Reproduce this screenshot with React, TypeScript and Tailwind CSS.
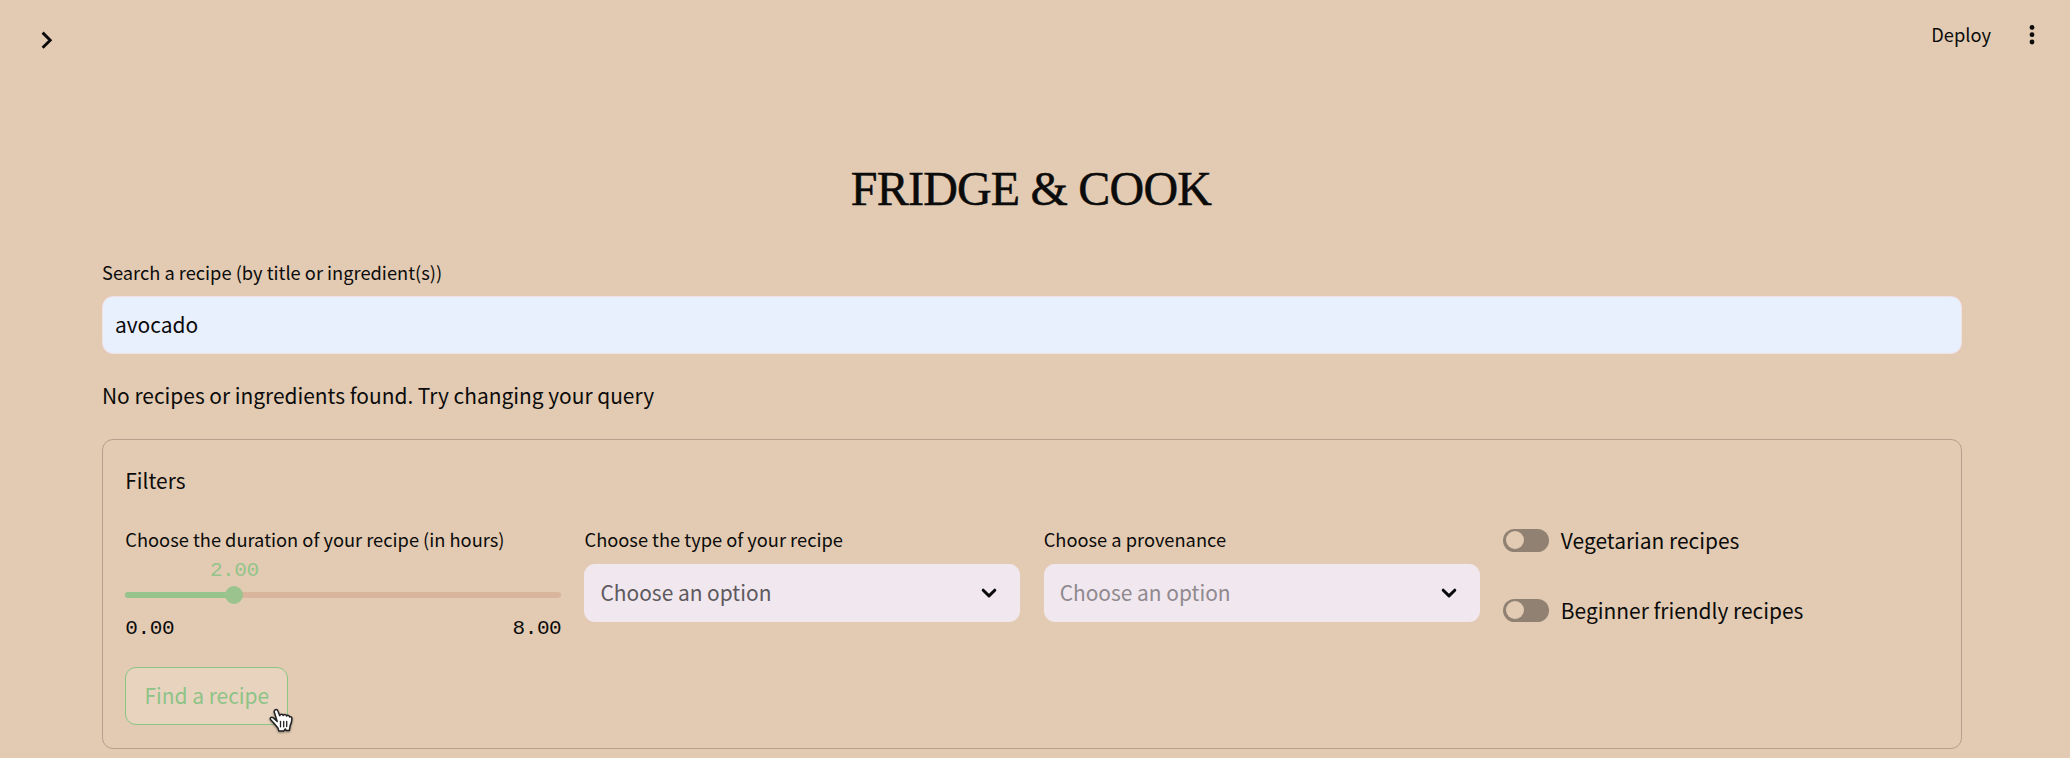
import React from "react";

function Label({ children }: { children: React.ReactNode }) {
  return <div className="h-7 whitespace-nowrap text-[18.28px] leading-7">{children}</div>;
}

function Chevron({ className }: { className: string }) {
  return (
    <svg viewBox="0 0 16 11" className={className} fill="none" stroke="currentColor" strokeWidth="3" strokeLinecap="round" strokeLinejoin="round">
      <path d="M2.2 2.2 8 7.9l5.8-5.7" />
    </svg>
  );
}

function Select({ label, tone }: { label: string; tone: string }) {
  return (
    <div className="w-[436px]">
      <Label>{label}</Label>
      <div className="mt-[11px] flex h-[58px] items-center justify-between rounded-[11px] bg-[#f1e7ef] pr-[23px] pl-4">
        <span className={`-mt-[2px] text-[20.92px] leading-9 ${tone}`}>Choose an option</span>
        <Chevron className="h-[11px] w-4" />
      </div>
    </div>
  );
}

function Toggle({ label }: { label: string }) {
  return (
    <div className="flex h-[34px] items-center gap-3">
      <div className="flex h-[23px] w-[46px] items-center rounded-full bg-[#908172] px-[3px]">
        <div className="size-[18px] rounded-full bg-[#e3cbb3]" />
      </div>
      <span className="text-[20.95px] leading-[34px] whitespace-nowrap">{label}</span>
    </div>
  );
}

const mono = "font-['Liberation_Mono',monospace]";

function DurationSlider() {
  return (
    <div className="w-[436px]">
      <Label>Choose the duration of your recipe (in hours)</Label>
      <div className={`flex h-[39px] w-[218px] justify-center pt-[4px] text-[#93c48b] text-[21px] tracking-[-0.4px] leading-7 ${mono}`}>2.00</div>
      <div className="relative h-[6px] overflow-visible rounded-full bg-[#dab59d]">
        <div className="h-full w-[109px] rounded-full bg-[#97c48c]" />
        <div className="absolute top-[-6px] left-[100px] size-[18px] rounded-full bg-[#9ac38e]" />
      </div>
      <div className={`mt-[17px] flex h-7 justify-between text-[21px] tracking-[-0.4px] leading-7 ${mono}`}>
        <span>0.00</span>
        <span>8.00</span>
      </div>
    </div>
  );
}

function HandCursor() {
  return (
    <svg viewBox="0 0 24 26" className="absolute top-[40px] left-[143px] h-[26px] w-6 drop-shadow-[0_1px_1px_rgba(0,0,0,0.4)]">
      <path
        d="M8.2 13.4 5.4 4.6C4.5 1.5 8 .4 9 3.2l1.8 4.5c.4-2 3.1-2 3.4-.1.6-1.6 3.1-1.3 3.4.5.8-1.3 2.8-.8 3 .9 1-.8 2.4 0 2.3 1.8-.1 2.6-.6 4.8-1.8 7l-.7 4.6h-3.2l-.9-1.4-1.6 1.9H9.8L8.9 20l-3.3-3.9L1.9 12c-1.6-1.8.2-3.6 2.2-2.4z"
        fill="#fff"
        stroke="#222"
        strokeWidth="1.5"
        strokeLinejoin="round"
      />
      <path d="M11.5 13.3v5.5M14.7 13.3v5.5M17.7 13.3v5.3" stroke="#222" strokeWidth="1.3" strokeLinecap="round" />
    </svg>
  );
}

export default function App() {
  return (
    <div className="flex h-[758px] w-[2070px] flex-col overflow-hidden bg-[#e3cbb3] font-['Noto_Sans_CJK_SC',sans-serif] text-[#0b0b0b]">
      <header className="flex h-[84px] items-start justify-between pr-[34px] pl-[41px]">
        <svg viewBox="0 0 12 18" className="mt-[31px] h-[18px] w-3" fill="none" stroke="currentColor" strokeWidth="2.9">
          <path d="m1.6 1.6 7.6 7.6-7.6 7.6" />
        </svg>
        <div className="flex items-start">
          <span className="mt-5 text-[18.28px] leading-7">Deploy</span>
          <svg viewBox="0 0 8 20" className="mt-[25px] ml-[37px] h-5 w-2" fill="currentColor">
            <circle cx="4" cy="2.4" r="2.4" />
            <circle cx="4" cy="9.7" r="2.4" />
            <circle cx="4" cy="17" r="2.4" />
          </svg>
        </div>
      </header>

      <main className="flex flex-col pr-[108px] pl-[102px]">
        <h1 className="mt-[75px] mb-[39px] flex h-[60px] items-center justify-center pr-[2px] font-['Liberation_Serif',serif] text-[48px] leading-[60px] tracking-[-0.8px] [-webkit-text-stroke:0.5px_#0b0b0b]">
          FRIDGE &amp; COOK
        </h1>
        <Label>Search a recipe (by title or ingredient(s))</Label>
        <div className="mt-[10px] flex h-[58px] items-center rounded-[11px] border border-[#f1e0e6] bg-[#e8effd] px-3 pb-[2px] text-[20.95px] leading-9">
          avocado
        </div>
        <p className="mt-[23px] h-9 text-[20.92px] leading-9">No recipes or ingredients found. Try changing your query</p>

        <section className="mt-[26px] h-[310px] rounded-[11px] border border-[#b79e8d] px-[22.3px] pt-[23px]">
          <h2 className="h-[34px] text-[20.9px] leading-[34px]">Filters</h2>
          <div className="mt-7 flex h-[142px] gap-[23.2px]">
            <DurationSlider />
            <Select label="Choose the type of your recipe" tone="text-[#5d595c]" />
            <Select label="Choose a provenance" tone="text-[#8f898e]" />
            <div className="-mt-[2px] flex flex-col gap-9">
              <Toggle label="Vegetarian recipes" />
              <Toggle label="Beginner friendly recipes" />
            </div>
          </div>
          <button className="relative flex h-[58px] w-[163px] items-center justify-center rounded-[11px] border border-[#8ac584] bg-[#e8d3bf] pb-[2px] text-[20.95px] leading-9 whitespace-nowrap text-[#8dc387]">
            Find a recipe
            <HandCursor />
          </button>
        </section>
      </main>
    </div>
  );
}
